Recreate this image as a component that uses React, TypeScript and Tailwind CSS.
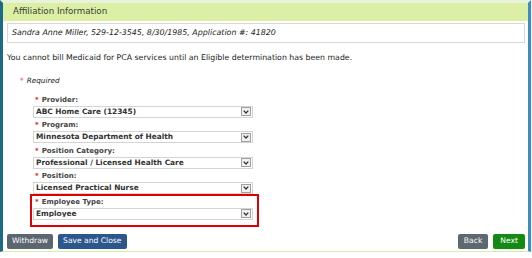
import React from "react";

function Chevron() {
  return (
    <svg width="6" height="4" viewBox="0 0 6 4" className="block">
      <path d="M0.7 0.6 L3 3 L5.3 0.6" fill="none" stroke="#333" strokeWidth="1.3" />
    </svg>
  );
}

function SelectBox({ value }: { value: string }) {
  return (
    <div className="flex h-[12px] w-[220px] items-center border border-[#d4d4d4] bg-white">
      <span className="flex-1 truncate pl-[2px] text-[7.4px] font-bold leading-none text-[#333]">
        {value}
      </span>
      <span className="mr-[1px] flex h-[9px] w-[10px] items-center justify-center border border-[#a0a0a0] bg-[#f0f0f0]">
        <Chevron />
      </span>
    </div>
  );
}

function Field({ label, value, top = "h-[13.5px]" }: { label: string; value: string; top?: string }) {
  return (
    <div className="flex flex-col">
      <div className={`flex items-end pb-[2px] pl-[2px] text-[7px] font-bold leading-none text-[#444] ${top}`}>
        <span className="mr-[3px] text-[#e02020]">*</span>
        {label}
      </div>
      <SelectBox value={value} />
    </div>
  );
}

function Btn({ label, color, px = "px-[5px]" }: { label: string; color: string; px?: string }) {
  return (
    <button className={`h-[15px] rounded-[2px] text-[7.6px] leading-none text-white ${px} ${color}`}>
      {label}
    </button>
  );
}

export default function App() {
  const fields = [
    { label: "Provider:", value: "ABC Home Care (12345)" },
    { label: "Program:", value: "Minnesota Department of Health" },
    { label: "Position Category:", value: "Professional / Licensed Health Care" },
    { label: "Position:", value: "Licensed Practical Nurse" },
  ];
  return (
    <div className="h-[258px] w-[532px] bg-white font-['DejaVu_Sans',sans-serif]">
      <div className="h-[252px] w-[531px] border-x-[3px] border-t-[3px] border-b border-l-[#1d6a86] border-r-[#3a8cc6] border-t-[#e9f2dc] border-b-[#d7efa5]">
        <div className="flex h-[18px] items-center bg-[#dbf0a5] pl-[10px] text-[8.7px] text-[#3a3a3a]">
          Affiliation Information
        </div>
        <div className="pl-[4px] pr-[3px] pt-[2px]">
          <div className="flex h-[20px] items-center border border-[#d8d8d8] pl-[4px] text-[7.9px] italic text-[#222]">
            Sandra Anne Miller, 529-12-3545, 8/30/1985, Application #: 41820
          </div>
          <div className="mt-[10px] flex h-[10px] items-center text-[7.8px] leading-none text-[#222]">
            You cannot bill Medicaid for PCA services until an Eligible determination has been made.
          </div>
          <div className="mt-[13px] flex h-[10px] items-center pl-[13px] text-[7.3px] italic leading-none text-[#222]">
            <span className="mr-[3px] not-italic text-[#e02020]">*</span>Required
          </div>
          <div className="mt-[6px] flex flex-col pl-[26px]">
            {fields.map((f) => (
              <Field key={f.label} label={f.label} value={f.value} />
            ))}
            <div className="-ml-[3px] w-[229px] border-2 border-[#e00000] pb-[5px] pl-[1px]">
              <Field label="Employee Type:" value="Employee" top="h-[11.5px]" />
            </div>
          </div>
          <div className="mt-[7px] flex items-center justify-between">
            <div className="flex gap-[5px]">
              <Btn label="Withdraw" color="bg-[#5b6670]" />
              <Btn label="Save and Close" color="bg-[#2c578c]" />
            </div>
            <div className="flex gap-[5px]">
              <Btn label="Back" color="bg-[#5d6870]" px="px-[6px]" />
              <Btn label="Next" color="bg-[#138a13]" px="px-[7px]" />
            </div>
          </div>
        </div>
      </div>
    </div>
  );
}
